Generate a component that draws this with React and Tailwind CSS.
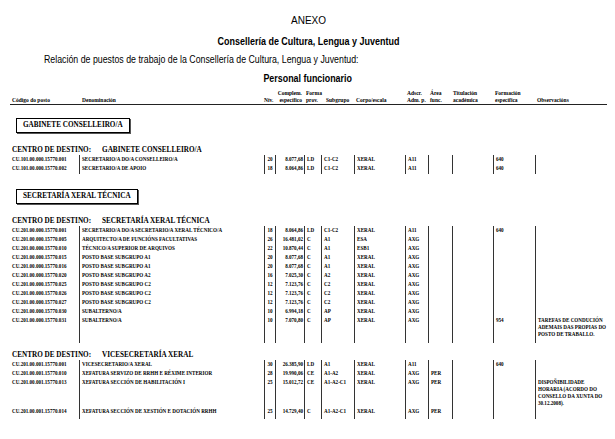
import React from "react";

const COLS = "grid grid-cols-[67px_185px_11px_29px_17px_33px_51px_23px_24px_41px_42px_75px]";

const sec1 = {
  box: "GABINETE CONSELLEIRO/A",
  centro: "GABINETE CONSELLEIRO/A",
  rows: [
    ["CU.101.00.000.15770.001", "SECRETARIO/A DO/A CONSELLEIRO/A", "20", "8.077,68", "LD", "C1-C2", "XERAL", "A11", "", "", "640", []],
    ["CU.101.00.000.15770.002", "SECRETARIO/A DE APOIO", "18", "8.064,86", "LD", "C1-C2", "XERAL", "A11", "", "", "640", []],
  ],
};

const sec2 = {
  box: "SECRETARÍA XERAL TÉCNICA",
  centro: "SECRETARÍA XERAL TÉCNICA",
  rows: [
    ["CU.201.00.000.15770.001", "SECRETARIO/A DO/A SECRETARIO/A XERAL TÉCNICO/A", "18", "8.064,86", "LD", "C1-C2", "XERAL", "A11", "", "", "640", []],
    ["CU.201.00.000.15770.005", "ARQUITECTO/A DE FUNCIÓNS FACULTATIVAS", "26", "16.481,02", "C", "A1", "ESA", "AXG", "", "", "", []],
    ["CU.201.00.000.15770.010", "TÉCNICO/A SUPERIOR DE ARQUIVOS", "22", "10.870,44", "C", "A1", "ESB1", "AXG", "", "", "", []],
    ["CU.201.00.000.15770.015", "POSTO BASE SUBGRUPO A1", "20", "8.077,68", "C", "A1", "XERAL", "AXG", "", "", "", []],
    ["CU.201.00.000.15770.016", "POSTO BASE SUBGRUPO A1", "20", "8.077,68", "C", "A1", "XERAL", "AXG", "", "", "", []],
    ["CU.201.00.000.15770.020", "POSTO BASE SUBGRUPO A2", "16", "7.025,30", "C", "A2", "XERAL", "AXG", "", "", "", []],
    ["CU.201.00.000.15770.025", "POSTO BASE SUBGRUPO C2", "12", "7.123,76", "C", "C2", "XERAL", "AXG", "", "", "", []],
    ["CU.201.00.000.15770.026", "POSTO BASE SUBGRUPO C2", "12", "7.123,76", "C", "C2", "XERAL", "AXG", "", "", "", []],
    ["CU.201.00.000.15770.027", "POSTO BASE SUBGRUPO C2", "12", "7.123,76", "C", "C2", "XERAL", "AXG", "", "", "", []],
    ["CU.201.00.000.15770.030", "SUBALTERNO/A", "10", "6.994,18", "C", "AP", "XERAL", "AXG", "", "", "", []],
    ["CU.201.00.000.15770.031", "SUBALTERNO/A", "10", "7.070,80", "C", "AP", "XERAL", "AXG", "", "", "954", ["TAREFAS DE CONDUCIÓN", "ADEMAIS DAS PROPIAS DO", "POSTO DE TRABALLO."]],
  ],
};

const sec3 = {
  centro: "VICESECRETARÍA XERAL",
  rows: [
    ["CU.201.00.001.15770.001", "VICESECRETARIO/A XERAL", "30", "26.385,90", "LD", "A1", "XERAL", "A11", "", "", "640", []],
    ["CU.201.00.001.15770.010", "XEFATURA SERVIZO DE RRHH E RÉXIME INTERIOR", "28", "19.990,06", "CE", "A1-A2", "XERAL", "AXG", "PER", "", "", []],
    ["CU.201.00.001.15770.013", "XEFATURA SECCIÓN DE HABILITACIÓN I", "25", "15.012,72", "CE", "A1-A2-C1", "XERAL", "AXG", "PER", "", "", ["DISPOÑIBILIDADE", "HORARIA (ACORDO DO", "CONSELLO DA XUNTA DO", "30.12.2008)."]],
    ["CU.201.00.001.15770.014", "XEFATURA SECCIÓN DE XESTIÓN E DOTACIÓN RRHH", "25", "14.729,40", "C", "A1-A2-C1", "XERAL", "AXG", "PER", "", "", []],
  ],
};

const cell = "border-l border-[#333] pl-[2px] whitespace-nowrap";

function Row({ r }) {
  const [code, den, niv, comp, forma, sub, corpo, adscr, area, tit, form, obs] = r;
  return (
    <div className={`${COLS} leading-[9px]`}>
      <div className="whitespace-nowrap">{code}</div>
      <div className={cell}>{den}</div>
      <div className="border-l border-[#333] text-center">{niv}</div>
      <div className="border-l border-[#333] text-right pr-[1px] whitespace-nowrap">{comp}</div>
      <div className={cell}>{forma}</div>
      <div className={cell}>{sub}</div>
      <div className={cell}>{corpo}</div>
      <div className={cell}>{adscr}</div>
      <div className={cell}>{area}</div>
      <div className={cell}>{tit}</div>
      <div className={cell}>{form}</div>
      <div className="border-l border-[#333] pl-[2px] leading-[7px] pt-[1px]">
        {obs.map((l, i) => (
          <div key={i} className="whitespace-nowrap">{l}</div>
        ))}
      </div>
    </div>
  );
}

function Filler({ h }) {
  const b = "border-l border-[#333]";
  return (
    <div className={`${COLS} ${h}`}>
      <div></div>
      <div className={b}></div>
      <div className={b}></div>
      <div className={b}></div>
      <div className={b}></div>
      <div className={b}></div>
      <div className={b}></div>
      <div className={b}></div>
      <div className={b}></div>
      <div className={b}></div>
      <div className={b}></div>
      <div className={b}></div>
    </div>
  );
}

function Box({ children, mt }) {
  return (
    <div className={`${mt} ml-[16px] flex`}>
      <div className="border border-black shadow-[1px_1px_0_#555] px-[6px] h-[15px] leading-[13px] text-[7.2px] font-bold font-['Liberation_Serif',serif]">
        {children}
      </div>
    </div>
  );
}

function Centro({ children, mt }) {
  return (
    <div className={`${mt} pl-[12px] leading-[10px] text-[7.2px] font-bold flex gap-[11px] font-['Liberation_Serif',serif]`}>
      <span>CENTRO DE DESTINO:</span>
      <span>{children}</span>
    </div>
  );
}

export default function App() {
  return (
    <div className="w-[615px] h-[439px] bg-white text-black overflow-hidden pt-[15px]">
      <div className="font-['Liberation_Sans',Arial,sans-serif]">
        <div className="text-center text-[10px] leading-[12px] pl-[2px]">ANEXO</div>
        <div className="mt-[8px] text-center text-[10.8px] leading-[12px] font-bold pl-[2px]">
          <span className="inline-block scale-x-[0.83]">Consellería de Cultura, Lengua y Juventud</span>
        </div>
        <div className="mt-[7px] pl-[44px] text-[10px] leading-[12px]">
          <span className="inline-block origin-left scale-x-[0.88] whitespace-nowrap">
            Relación de puestos de trabajo de la Consellería de Cultura, Lengua y Juventud:
          </span>
        </div>
        <div className="mt-[6px] text-center text-[10.6px] leading-[12px] font-bold">
          <span className="inline-block scale-x-[0.84]">Personal funcionario</span>
        </div>
      </div>

      <div className="font-bold font-['Liberation_Serif','Times_New_Roman',serif]">
        <div className="mt-[6px] ml-[10px] w-[597px] pl-[2px] border-b-[1.5px] border-[#222] text-[5.5px] leading-[7px]">
          <div className={`${COLS} items-end`}>
            <div className="whitespace-nowrap">Código do posto</div>
            <div className="whitespace-nowrap pl-[3px]">Denominación</div>
            <div className="whitespace-nowrap">Nív.</div>
            <div className="whitespace-nowrap text-right pr-[2px]">
              <div>Complem.</div>
              <div>específico</div>
            </div>
            <div className="whitespace-nowrap pl-[2px]">
              <div>Forma</div>
              <div>prov.</div>
            </div>
            <div className="whitespace-nowrap pl-[5px]">Subgrupo</div>
            <div className="whitespace-nowrap pl-[2px]">Corpo/escala</div>
            <div className="whitespace-nowrap pl-[2px]">
              <div>Adscr.</div>
              <div>Adm. p.</div>
            </div>
            <div className="whitespace-nowrap pl-[2px]">
              <div>Área</div>
              <div>func.</div>
            </div>
            <div className="whitespace-nowrap pl-[1px]">
              <div>Titulación</div>
              <div>académica</div>
            </div>
            <div className="whitespace-nowrap pl-[2px]">
              <div>Formación</div>
              <div>específica</div>
            </div>
            <div className="whitespace-nowrap pl-[2px]">Observacións</div>
          </div>
        </div>

        <Box mt="mt-[13px]">{sec1.box}</Box>
        <Centro mt="mt-[12px]">{sec1.centro}</Centro>
        <div className="pl-[12px] text-[5.1px]">
          {sec1.rows.map((r, i) => (
            <Row key={i} r={r} />
          ))}
          <Filler h="h-[1px]" />
        </div>

        <Box mt="mt-[15px]">{sec2.box}</Box>
        <Centro mt="mt-[12px]">{sec2.centro}</Centro>
        <div className="pl-[12px] text-[5.1px]">
          {sec2.rows.map((r, i) => (
            <Row key={i} r={r} />
          ))}
          <Filler h="h-[5px]" />
        </div>

        <Centro mt="mt-[7px]">{sec3.centro}</Centro>
        <div className="pl-[12px] text-[5.1px]">
          {sec3.rows.map((r, i) => (
            <Row key={i} r={r} />
          ))}
          <Filler h="h-[3px]" />
        </div>
      </div>
    </div>
  );
}
